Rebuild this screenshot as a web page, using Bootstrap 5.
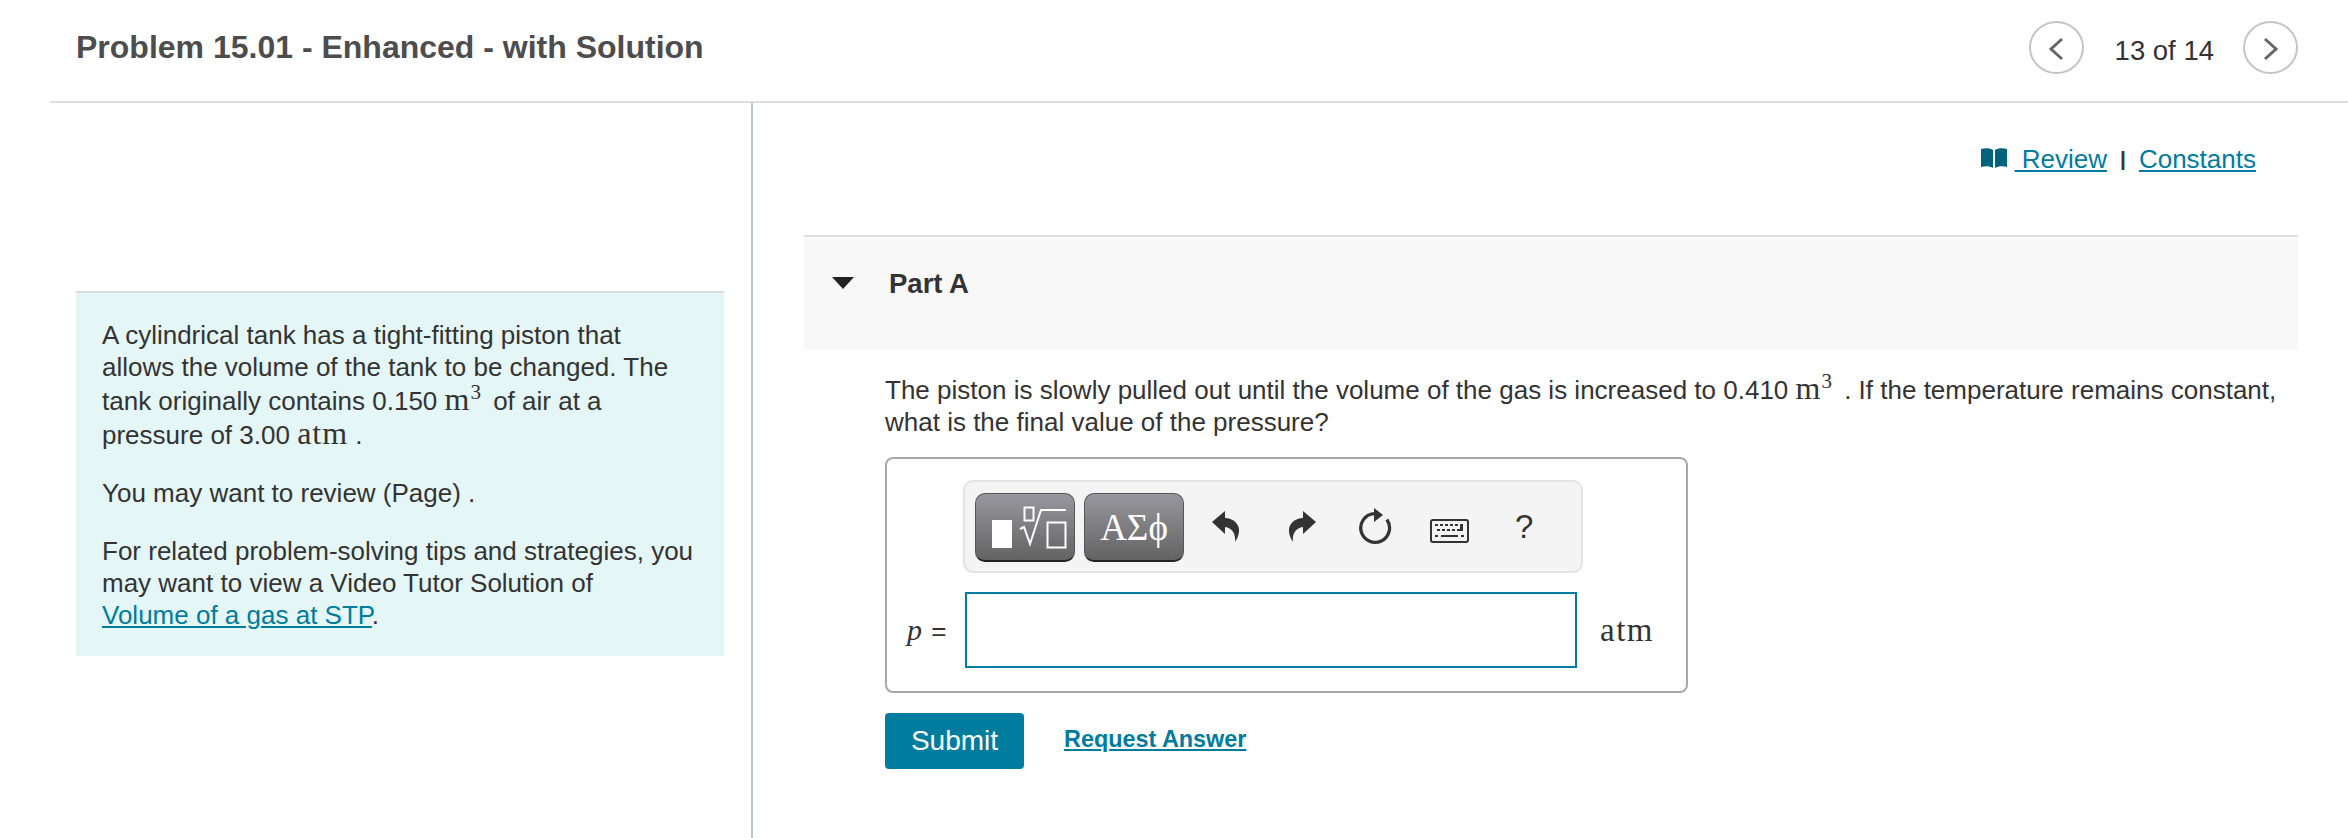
<!DOCTYPE html>
<html lang="en">
<head>
<meta charset="utf-8">
<title>Problem 15.01</title>
<link href="https://cdn.jsdelivr.net/npm/bootstrap@5.3.0/dist/css/bootstrap.min.css" rel="stylesheet">
<style>
html,body{height:838px;overflow:hidden;background:#fff}
body{font-family:"Liberation Sans",Arial,sans-serif;color:#333;font-size:26px;line-height:32px}
a{color:#007c9e}
.top-bar{height:103px;margin-left:50px;border-bottom:2px solid #ddd;padding:0 50px 0 26px}
.page-title{font-size:32px;font-weight:700;color:#4d4d4d;margin:0;line-height:36px;padding-bottom:8px}
.pager{gap:31px;padding-bottom:7px}
.pager-count{font-size:27.500px;color:#333;line-height:32px;padding-top:7px;margin-right:-2px}
.round-btn{width:55px;height:53px;border:2px solid #c4c4c4;border-radius:50%;background:#fff;padding:0}
.work{height:735px}
.side-col{width:753px;flex:none;border-right:2px solid #b9c6cf;padding:188px 27px 0 76px}
.intro-panel{background:#e5f6f6;border-top:2px solid #ddd;padding:26px 26px 26px;height:365px}
.intro-panel p{margin:0 0 26px}
.main-col{flex:1;padding:0 50px 0 51px}
.res-row{height:132px;padding:40px 42px 0 0;gap:8px}
.book-ic{margin:5px 0 0 0;flex:none}
.sep-bar{font-size:21px;font-weight:700;padding:0 5px}
.part-head{height:115px;background:#f8f8f8;border-top:2px solid #ddd;padding:31px 0 0 28px;gap:35px}
.part-title{font-size:27.500px;font-weight:700;color:#333;margin:0;line-height:32px}
.caret-ic{margin-top:9px}
.part-body{padding:22px 0 0 81px}
.prompt{margin:0 0 19px}
.mth{font-family:"Liberation Serif","DejaVu Serif",serif;font-size:32px;letter-spacing:1px;line-height:1}
.pwr{display:inline-block;font-family:"Liberation Serif",serif;font-size:21px;line-height:19px;vertical-align:11px;margin-right:5px}
.answer-box{width:803px;height:236px;border:2px solid #a8a8a8;border-radius:8px;padding:21px 0 0 76px}
.tools{width:620px;height:93px;background:#f4f4f4;border:2px solid #e3e3e3;border-radius:10px;padding:11px 0 0 10px}
.sym-btn{width:100px;height:69px;border:1px solid #56565a;border-bottom:2px solid #222;border-radius:10px;background:linear-gradient(#98979e,#636363);padding:0;margin-right:9px;color:#fff;font-family:"Liberation Serif",serif;font-size:37px;line-height:1}
.tool-ic{flex:none}
.ic-undo{margin:18px 0 0 19px}
.ic-redo{margin:18px 0 0 50px}
.ic-reset{margin:15px 0 0 43px}
.ic-keys{margin:26px 0 0 38px}
.tool-q{font-size:33px;color:#333;line-height:36px;margin:16px 0 0 46px}
.answer-row{margin-top:19px;margin-left:-56px}
.var-lbl{width:58px;font-size:26px;white-space:nowrap}
.var-lbl i{font-family:"Liberation Serif",serif;font-size:30px;margin-right:2px}
.ans-input{width:612px;height:76px;border:2px solid #007c9e;border-radius:0;background:#fff;padding:0 10px}
.unit-lbl{margin-left:23px;font-size:33px;letter-spacing:1.500px}
.submit-row{margin-top:20px;gap:40px}
.submit-btn{background:#007c9e;border:0;border-radius:4px;color:#fff;width:139px;height:56px;font-size:28px;padding:0}
.submit-btn:hover{background:#007c9e;color:#fff}
.req-link{font-size:23.400px;font-weight:700;margin-bottom:4px}
</style>
</head>
<body>
<header class="top-bar d-flex align-items-center justify-content-between">
  <h1 class="page-title">Problem 15.01 - Enhanced - with Solution</h1>
  <div class="pager d-flex align-items-center">
    <button class="round-btn" aria-label="Previous"><svg width="16" height="24" viewBox="0 0 16 24"><path d="M14 2 3 12l11 10" fill="none" stroke="#666" stroke-width="3"/></svg></button>
    <span class="pager-count">13 of 14</span>
    <button class="round-btn" aria-label="Next"><svg width="16" height="24" viewBox="0 0 16 24"><path d="m2 2 11 10L2 22" fill="none" stroke="#666" stroke-width="3"/></svg></button>
  </div>
</header>
<div class="work d-flex">
  <aside class="side-col">
    <div class="intro-panel">
      <p>A cylindrical tank has a tight-fitting piston that allows the volume of the tank to be changed. The tank originally contains 0.150 <span class="mth">m</span><span class="pwr">3</span> of air at a pressure of 3.00 <span class="mth">atm</span> .</p>
      <p>You may want to review (Page) .</p>
      <p>For related problem-solving tips and strategies, you may want to view a Video Tutor Solution of <a class="text-nowrap" href="#">Volume of a gas at STP</a>.</p>
    </div>
  </aside>
  <main class="main-col">
    <div class="res-row d-flex justify-content-end">
      <svg class="book-ic" width="26" height="20" viewBox="0 0 26 20"><path d="M0 1c4-1 9-1 12 1v18c-3-2-8-2-12-1zM14 2c3-2 8-2 12-1v18c-4-1-9-1-12 1z" fill="#00637c"/></svg>
      <a href="#">&nbsp;Review</a>
      <span class="sep-bar">|</span>
      <a href="#">Constants</a>
    </div>
    <div class="part-head d-flex">
      <svg class="caret-ic" width="22" height="12" viewBox="0 0 22 12"><path d="M0 0h22L11 12z" fill="#222"/></svg>
      <h2 class="part-title">Part A</h2>
    </div>
    <div class="part-body">
      <p class="prompt">The piston is slowly pulled out until the volume of the gas is increased to 0.410 <span class="mth">m</span><span class="pwr">3</span> . If the temperature remains constant, what is the final value of the pressure?</p>
      <div class="answer-box">
        <div class="tools d-flex align-items-start">
          <button class="sym-btn" aria-label="Templates"><svg width="98" height="66" viewBox="0 0 98 66"><rect x="16" y="26" width="20" height="28" fill="#fff"/><path d="M48.500 13.500h9v13h-9zM71.500 28.500h18v25h-18zM44 35l4-2 6 17 11-34h25" fill="none" stroke="#fff" stroke-width="2"/></svg></button>
          <button class="sym-btn" aria-label="Symbols">ΑΣϕ</button>
          <svg class="tool-ic ic-undo" width="27" height="31" viewBox="0 0 27 31"><path d="M0 11 13 0v7c9 0 15 7 14 14-.5 4-2 7-4 10 1-7-2-14-10-15v7z" fill="#333"/></svg>
          <svg class="tool-ic ic-redo" width="27" height="31" viewBox="0 0 27 31"><path d="M27 11 14 0v7C5 7-1 14 0 21c.5 4 2 7 4 10-1-7 2-14 10-15v7z" fill="#333"/></svg>
          <svg class="tool-ic ic-reset" width="33" height="37" viewBox="0 0 33 37"><path d="M27.800 11.500A14.400 14.400 0 1 1 15 5.600" fill="none" stroke="#333" stroke-width="3.300"/><path d="M15 0l9 7-9 7z" fill="#333"/></svg>
          <svg class="tool-ic ic-keys" width="39" height="24" viewBox="0 0 39 24"><rect x="1" y="1" width="37" height="22" rx="2" fill="#f4f4f4" stroke="#333" stroke-width="2"/><path d="M5 5h3v2H5zm5 0h3v2h-3zm5 0h3v2h-3zm5 0h3v2h-3zm5 0h3v2h-3zm5 0h3v5h-3zM7 10h3v2H7zm5 0h3v2h-3zm5 0h3v2h-3zm5 0h3v2h-3zm5 0h6v2h-6zM5 16h3v2H5zm6 0h17v2H11zm20 0h3v2h-3z" fill="#333"/></svg>
          <span class="tool-q">?</span>
        </div>
        <div class="answer-row d-flex align-items-center">
          <label class="var-lbl" for="ans"><i>p</i> =</label>
          <input class="ans-input" id="ans" type="text">
          <span class="mth unit-lbl">atm</span>
        </div>
      </div>
      <div class="submit-row d-flex align-items-center">
        <button class="btn submit-btn">Submit</button>
        <a class="req-link" href="#">Request Answer</a>
      </div>
    </div>
  </main>
</div>
</body>
</html>
